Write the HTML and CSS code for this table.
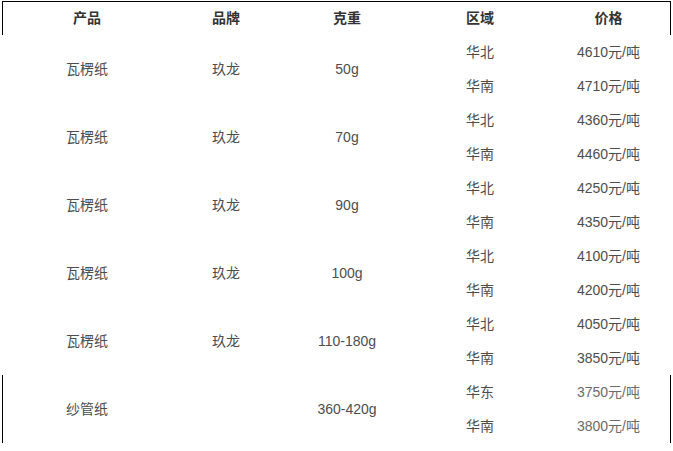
FILE: index.html
```html
<!DOCTYPE html>
<html lang="zh-CN">
<head>
<meta charset="utf-8">
<title>价格表</title>
<link rel="stylesheet" href="styles.css">
</head>
<body>
<div class="table">
  <div class="row head">
    <div class="cell">产品</div>
    <div class="cell">品牌</div>
    <div class="cell">克重</div>
    <div class="cell">区域</div>
    <div class="cell">价格</div>
  </div>
  <div class="group">
    <div class="cell span">瓦楞纸</div>
    <div class="cell span">玖龙</div>
    <div class="cell span">50g</div>
    <div class="cell">华北</div><div class="cell">4610元/吨</div>
    <div class="cell">华南</div><div class="cell">4710元/吨</div>
  </div>
  <div class="group">
    <div class="cell span">瓦楞纸</div>
    <div class="cell span">玖龙</div>
    <div class="cell span">70g</div>
    <div class="cell">华北</div><div class="cell">4360元/吨</div>
    <div class="cell">华南</div><div class="cell">4460元/吨</div>
  </div>
  <div class="group">
    <div class="cell span">瓦楞纸</div>
    <div class="cell span">玖龙</div>
    <div class="cell span">90g</div>
    <div class="cell">华北</div><div class="cell">4250元/吨</div>
    <div class="cell">华南</div><div class="cell">4350元/吨</div>
  </div>
  <div class="group">
    <div class="cell span">瓦楞纸</div>
    <div class="cell span">玖龙</div>
    <div class="cell span">100g</div>
    <div class="cell">华北</div><div class="cell">4100元/吨</div>
    <div class="cell">华南</div><div class="cell">4200元/吨</div>
  </div>
  <div class="group">
    <div class="cell span">瓦楞纸</div>
    <div class="cell span">玖龙</div>
    <div class="cell span">110-180g</div>
    <div class="cell">华北</div><div class="cell">4050元/吨</div>
    <div class="cell">华南</div><div class="cell">3850元/吨</div>
  </div>
  <div class="group last">
    <div class="cell span">纱管纸</div>
    <div class="cell span"></div>
    <div class="cell span">360-420g</div>
    <div class="cell">华东</div><div class="cell faded">3750元/吨</div>
    <div class="cell">华南</div><div class="cell faded">3800元/吨</div>
  </div>
</div>
</body>
</html>
```
FILE: styles.css
```css
html, body {
  margin: 0;
  padding: 0;
  background: #ffffff;
}
body {
  font-family: "Liberation Sans", "Noto Sans CJK SC", sans-serif;
  font-size: 14px;
  color: #4d4d4d;
}
.table {
  margin: 1px 0 0 2px;
  width: 669px;
  display: flex;
  flex-direction: column;
}
.row, .group {
  display: grid;
  grid-template-columns: 170px 108px 134px 132px 125px;
}
.row {
  height: 34px;
}
.group {
  grid-template-rows: 34px 34px;
}
.head {
  box-shadow: inset 1px 1px 0 #000, inset -1px 0 0 #000;
  color: #333333;
  font-weight: bold;
}
.last {
  box-shadow: inset 1px 0 0 #000, inset -1px 0 0 #000;
}
.cell {
  display: flex;
  align-items: center;
  justify-content: center;
  line-height: 1;
}
.span {
  grid-row: span 2;
}
.faded {
  color: #6a6a6a;
}
```
